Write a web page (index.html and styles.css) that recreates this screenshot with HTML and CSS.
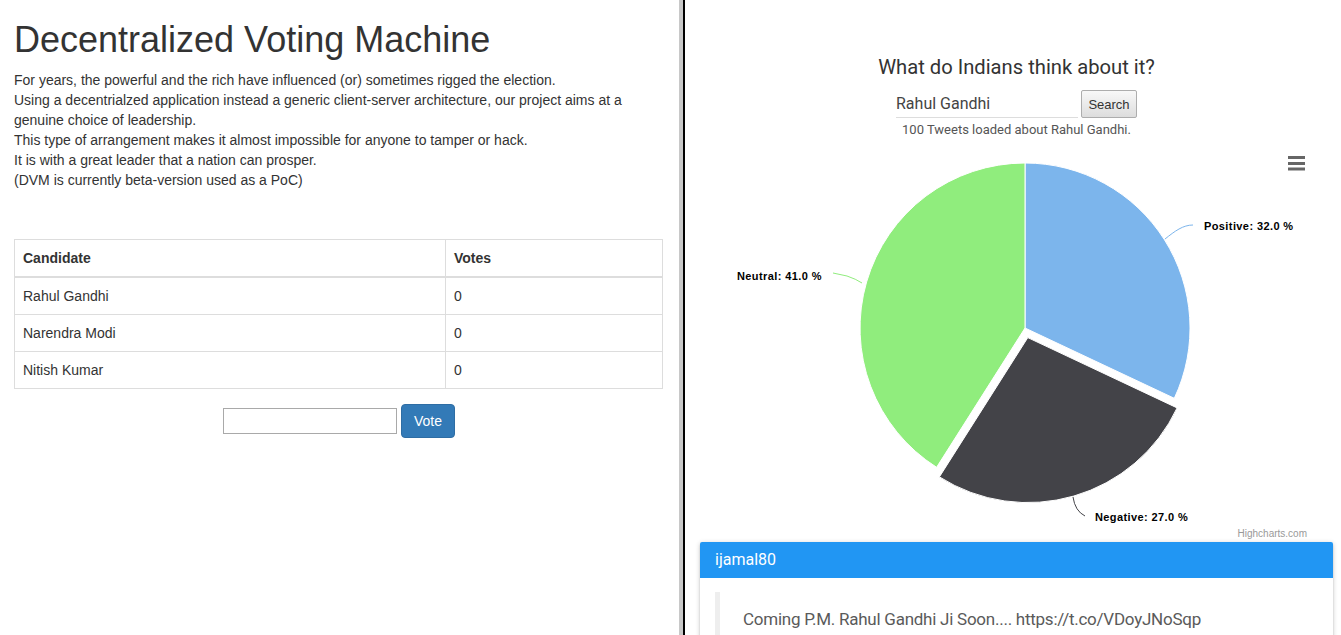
FILE: index.html
```html
<!DOCTYPE html>
<html>
<head>
<meta charset="utf-8">
<title>Decentralized Voting Machine</title>
<link rel="stylesheet" href="styles.css">
</head>
<body>
<div class="split">
  <div class="left">
    <h1 class="title">Decentralized Voting Machine</h1>
    <p class="intro">For years, the powerful and the rich have influenced (or) sometimes rigged the election.<br>
    Using a decentrialzed application instead a generic client-server architecture, our project aims at a genuine choice of leadership.<br>
    This type of arrangement makes it almost impossible for anyone to tamper or hack.<br>
    It is with a great leader that a nation can prosper.<br>
    (DVM is currently beta-version used as a PoC)</p>
    <table class="votes">
      <thead>
        <tr><th class="col-name">Candidate</th><th>Votes</th></tr>
      </thead>
      <tbody>
        <tr><td>Rahul Gandhi</td><td>0</td></tr>
        <tr><td>Narendra Modi</td><td>0</td></tr>
        <tr><td>Nitish Kumar</td><td>0</td></tr>
      </tbody>
    </table>
    <div class="vote-row">
      <input class="vote-input" type="text">
      <button class="vote-btn">Vote</button>
    </div>
  </div>
  <div class="divider"></div>
  <div class="right">
    <h5 class="question">What do Indians think about it?</h5>
    <div class="search-row">
      <input class="search-input" type="text" value="Rahul Gandhi">
      <button class="search-btn">Search</button>
    </div>
    <div class="info">100 Tweets loaded about Rahul Gandhi.</div>
    <div class="chart">
      <svg class="chart-svg" width="633" height="400" viewBox="700 142 633 400" xmlns="http://www.w3.org/2000/svg">
        <g class="menu" stroke="#666" stroke-width="3">
          <line x1="1288" y1="157.5" x2="1305" y2="157.5"/>
          <line x1="1288" y1="163.5" x2="1305" y2="163.5"/>
          <line x1="1288" y1="169" x2="1305" y2="169"/>
        </g>
        <path d="M1025,328 L1025,163 A165,165 0 0 1 1174.3,398.3 Z" fill="#7cb5ec" stroke="#fff" stroke-width="1"/>
        <path d="M1027.8,337.6 L1177.1,407.9 A165,165 0 0 1 939.4,476.9 Z" fill="#434348" stroke="#fff" stroke-width="1"/>
        <path d="M1025,328 L936.6,467.3 A165,165 0 0 1 1025,163 Z" fill="#90ed7d" stroke="#fff" stroke-width="1"/>
        <path d="M1165,239 C1175,231 1183,225 1193,225" fill="none" stroke="#7cb5ec" stroke-width="1"/>
        <path d="M833,273 L847,276 Q856,279 862,283" fill="none" stroke="#90ed7d" stroke-width="1"/>
        <path d="M1073,497 Q1075,511 1085,516" fill="none" stroke="#434348" stroke-width="1"/>
        <text class="lbl" x="1204" y="230">Positive: 32.0 %</text>
        <text class="lbl" x="737" y="280">Neutral: 41.0 %</text>
        <text class="lbl" x="1095" y="521">Negative: 27.0 %</text>
        <text class="credits" x="1307" y="537" text-anchor="end">Highcharts.com</text>
      </svg>
    </div>
    <div class="card">
      <div class="card-head">ijamal80</div>
      <div class="card-body">
        <blockquote class="tweet">Coming P.M. Rahul Gandhi Ji Soon.... https://t.co/VDoyJNoSqp</blockquote>
      </div>
    </div>
  </div>
</div>
</body>
</html>
```
FILE: styles.css
```css
* { box-sizing: border-box; }
html, body { margin: 0; padding: 0; background: #fff; height: 100%; overflow: hidden; }
.split { display: flex; height: 635px; }

.left {
  width: 679px;
  flex: none;
  display: flex;
  flex-direction: column;
  padding: 0 16px 0 14px;
  font-family: "Liberation Sans", Arial, sans-serif;
  font-size: 14px;
  line-height: 20px;
  color: #333;
}
.title {
  margin: 20px 0 10px;
  font-size: 36px;
  font-weight: 500;
  line-height: 40px;
  color: #333;
}
.intro { margin: 0; }
.votes {
  margin-top: 49px;
  width: 649px;
  border-collapse: collapse;
  border: 1px solid #ddd;
}
.votes th, .votes td {
  padding: 8px;
  border: 1px solid #ddd;
  text-align: left;
  line-height: 20px;
}
.votes th { font-weight: bold; border-bottom: 2px solid #ddd; }
.col-name { width: 431px; }
.vote-row {
  margin-top: 15px;
  display: flex;
  justify-content: center;
  align-items: center;
  gap: 4px;
}
.vote-input {
  width: 174px;
  height: 26px;
  border: 1px solid #a9a9a9;
  padding: 1px 2px;
  margin-top: -1px;
  margin-left: 1px;
}
.vote-btn {
  height: 34px;
  padding: 6px 12px;
  font-family: "Liberation Sans", Arial, sans-serif;
  font-size: 14px;
  line-height: 20px;
  color: #fff;
  background: #337ab7;
  border: 1px solid #2e6da4;
  border-radius: 4px;
}

.divider {
  width: 6px;
  flex: none;
  background: #c8c8c8;
  border-right: 2px solid #000;
}

.right {
  width: 656px;
  flex: none;
  display: flex;
  flex-direction: column;
  align-items: center;
  padding: 0 8px 0 15px;
  font-family: Roboto, "Noto Sans", sans-serif;
  color: #333;
}
.question {
  margin: 53px 0 0;
  font-size: 20.2px;
  font-weight: 400;
  line-height: 28px;
  color: #333;
}
.search-row {
  margin-top: 9px;
  display: flex;
  align-items: flex-start;
  gap: 3px;
  height: 28px;
}
.search-input {
  width: 182px;
  height: 28px;
  border: none;
  border-bottom: 1px solid #ddd;
  padding: 0;
  font-family: Roboto, sans-serif;
  font-size: 16px;
  color: #444;
  outline: none;
}
.search-btn {
  width: 56px;
  height: 28px;
  font-family: "Liberation Sans", Arial, sans-serif;
  font-size: 13px;
  color: #333;
  border: 1px solid #adadad;
  border-radius: 2px;
  background: linear-gradient(#f8f8f8, #dddddd);
  padding: 0;
}
.info {
  margin-top: 3px;
  font-size: 13px;
  line-height: 18px;
  color: #555;
}
.chart {
  margin-top: 3px;
  width: 633px;
  height: 400px;
}
.chart-svg { display: block; }
.lbl {
  font-family: "Liberation Sans", Arial, sans-serif;
  font-size: 11px;
  font-weight: bold;
  letter-spacing: 0.4px;
  fill: #000;
}
.credits {
  font-family: "Liberation Sans", Arial, sans-serif;
  font-size: 10px;
  fill: #999;
}
.card {
  width: 633px;
  flex: none;
  background: #fff;
  border-radius: 2px;
  box-shadow: 0 2px 2px 0 rgba(0,0,0,.14), 0 3px 1px -2px rgba(0,0,0,.12), 0 1px 5px 0 rgba(0,0,0,.2);
}
.card-head {
  height: 36px;
  line-height: 36px;
  padding-left: 15px;
  background: #2196f3;
  color: #fff;
  font-size: 16px;
  border-radius: 2px 2px 0 0;
}
.card-body { padding: 14px 15px 15px; }
.tweet {
  margin: 0;
  padding: 15px 23px;
  border-left: 5px solid #eee;
  font-size: 17px;
  letter-spacing: -0.25px;
  line-height: 25px;
  color: #5a5a5a;
}
```
